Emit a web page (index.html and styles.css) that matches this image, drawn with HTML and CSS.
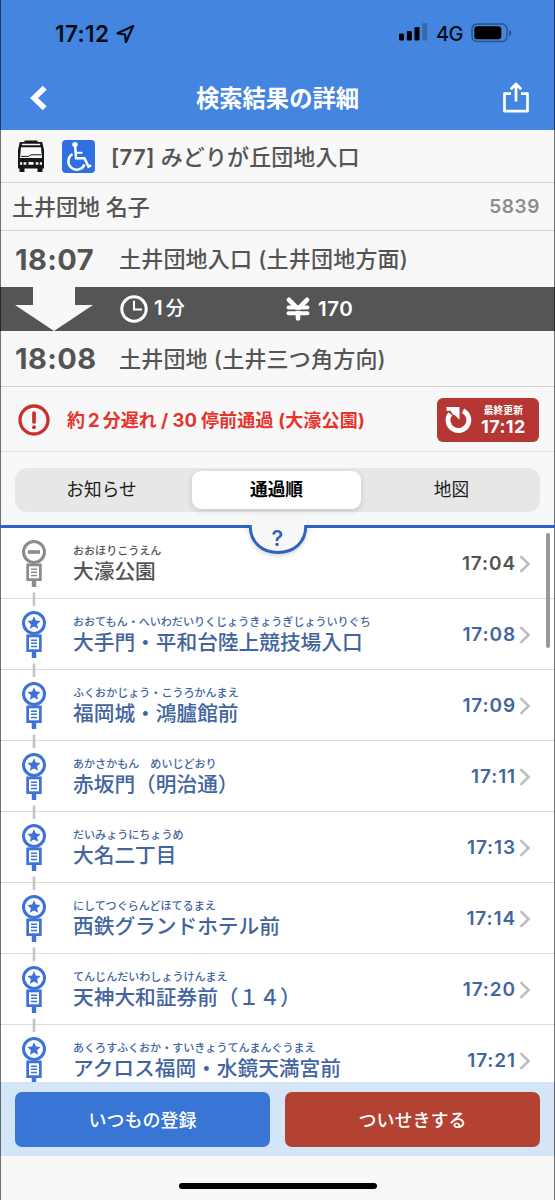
FILE: index.html
```html
<!DOCTYPE html>
<html lang="ja">
<head>
<meta charset="utf-8">
<title>検索結果の詳細</title>
<link rel="stylesheet" href="styles.css">
</head>
<body>
<svg class="defs" width="0" height="0">
  <symbol id="pole" viewBox="0 0 24 66">
    <circle cx="12" cy="12" r="10.500" fill="none" stroke="currentColor" stroke-width="3"/>
    <path d="M4.300 23.500h15.400v17.500h-5.500v6h-4.400v-6h-5.500z" fill="currentColor"/>
    <path d="M7 26.300h10v12H7z" fill="#fff"/>
    <path d="M9 29.200h6M9 32.300h6M9 35.400h6" stroke="currentColor" stroke-width="1.500"/>
    <path d="M12 52.500v13.500" stroke="#c4c4c4" stroke-width="2.600"/>
  </symbol>
  <symbol id="star" viewBox="0 0 24 66">
    <path d="M12 5.300l1.900 4.300 4.700.5-3.500 3.100 1 4.600-4.100-2.400-4.100 2.400 1-4.600-3.500-3.100 4.700-.5z" fill="currentColor"/>
  </symbol>
  <symbol id="chev" viewBox="0 0 12 18">
    <path d="M1.500 1.200L9.600 9l-8.100 7.800" fill="none" stroke="#bdbdbf" stroke-width="2.500"/>
  </symbol>
</svg>
<div class="screen">
  <header class="header">
    <div class="status">
      <span class="status-time">17:12</span>
      <svg class="location" width="19" height="20" viewBox="0 0 19 20"><path d="M17.200 2L1.500 9.300l7.500 1.200.9 7.500z" fill="none" stroke="#050c16" stroke-width="2.200" stroke-linejoin="round"/></svg>
      <svg class="signal" width="29" height="18" viewBox="0 0 29 18"><rect x="0" y="10.500" width="5" height="7" rx="1.300"/><rect x="7.800" y="8" width="5" height="9.500" rx="1.300"/><rect x="15.500" y="4" width="5" height="13.500" rx="1.300"/><rect x="23.200" y="0" width="5" height="17.500" rx="1.300" fill="#3569b0"/></svg>
      <span class="network">4G</span>
      <svg class="battery" width="42" height="20" viewBox="0 0 42 20"><rect x="1" y="1" width="35" height="17.500" rx="5" fill="none" stroke="#2a528c" stroke-width="1.400"/><rect x="3.300" y="3.300" width="27" height="13" rx="3"/><path d="M38 7c3 1 3 5 0 6z" fill="#2a528c"/></svg>
    </div>
    <div class="nav">
      <svg width="18" height="28" viewBox="0 0 18 28"><path d="M14.700 3.800L4 14l10.700 10.200" fill="none" stroke="#fff" stroke-width="5.600"/></svg>
      <h1 class="title">検索結果の詳細</h1>
      <svg width="26" height="31" viewBox="0 0 26 31"><path d="M8 11.700H1.500v17.500h23V11.700H18M13 19.500V2.500M7.800 7.200L13 2l5.200 5.200" fill="none" stroke="#fff" stroke-width="2.700" stroke-linejoin="round"/></svg>
    </div>
  </header>

  <section class="line-row">
    <svg class="bus" width="28" height="32" viewBox="0 0 28 32">
      <path d="M7.500.5h13v2.200h-13zM2.800 2h22.400l1.800 8v18.500H1V10z" fill="#161616"/>
      <path d="M4.800 3.800h18.400v1.400H4.800zM4 7.200h20l1 10.800H3z" fill="#f8f8f8"/>
      <path d="M4 16.400h7.500l2.500-1.600h10" fill="none" stroke="#161616" stroke-width="1"/>
      <path d="M3 22.200h2.200v2.500H3zM6.600 22.200h2.700v2.500H6.600zM11.500 22h5v2.700h-5zM18.700 22.200h2.700v2.500h-2.700zM22.800 22.200H25v2.500h-2.200z" fill="#f8f8f8"/>
      <path d="M2.500 28h5v4h-5zM20.500 28h5v4h-5z" fill="#161616"/>
    </svg>
    <svg class="wheelchair" width="33" height="33" viewBox="0 0 33 33">
      <rect width="33" height="33" rx="4" fill="#2f6fe0"/>
      <circle cx="13" cy="4.600" r="2.700" fill="#fff"/>
      <path d="M13.200 6.500l.8 11.800h8.500l4 8.200 2.700-1.200" fill="none" stroke="#fff" stroke-width="2.500"/>
      <path d="M14 12.800h6.500" stroke="#fff" stroke-width="2"/>
      <path d="M10.500 14a8.400 8.400 0 1 0 12 10.500" fill="none" stroke="#fff" stroke-width="2.400"/>
    </svg>
    <span class="route"><b class="route-no">[77]</b> みどりが丘団地入口</span>
  </section>
  <section class="vehicle-row">
    <span>土井団地 名子</span><span class="vehicle-no">5839</span>
  </section>

  <section class="trip">
    <div class="trip-stop dep"><span class="trip-time">18:07</span><span>土井団地入口 (土井団地方面)</span></div>
    <div class="trip-info">
      <svg class="arrow" width="78" height="44" viewBox="0 0 78 44"><path d="M18 0h42v18h18L39 44 0 18h18z" fill="#f8f8f8"/></svg>
      <svg class="clock" width="28" height="28" viewBox="0 0 28 28"><circle cx="14" cy="14" r="12.200" fill="none" stroke="#fff" stroke-width="3"/><path d="M14 5.800v8.800h8" fill="none" stroke="#fff" stroke-width="2"/></svg>
      <span class="duration">1<i>分</i></span>
      <svg class="yen" width="24" height="24" viewBox="0 0 24 24"><path d="M3 2.800L12 12l9-9.200M12 12v9.500" fill="none" stroke="#fff" stroke-width="4.600" stroke-linecap="round" stroke-linejoin="round"/><path d="M2.500 10.600h19M2.500 16.300h19" stroke="#fff" stroke-width="4" stroke-linecap="round"/><path d="M1 13.400h22" stroke="#555" stroke-width="1"/></svg>
      <span class="fare">170</span>
    </div>
    <div class="trip-stop arr"><span class="trip-time">18:08</span><span>土井団地 (土井三つ角方向)</span></div>
  </section>

  <section class="alert">
    <svg width="32" height="32" viewBox="0 0 32 32"><circle cx="16" cy="16" r="14" fill="none" stroke="#cb302c" stroke-width="3.300"/><path d="M16 9v9" stroke="#cb302c" stroke-width="3.700" stroke-linecap="round"/><circle cx="16" cy="23.200" r="2" fill="#cb302c"/></svg>
    <span class="alert-text">約<b class="two">2</b>分遅れ <b>/ 30</b><span class="alert-tail">停前通過 (大濠公園)</span></span>
    <button class="refresh">
      <svg width="27" height="28" viewBox="0 0 27 28"><path d="M18 4.800A10.400 10.400 0 1 1 5.200 7.800" fill="none" stroke="#fff" stroke-width="4.900"/><path d="M1.500 1h13v12.800L10.300 9.500 8 8.500 5.500 4.700H1.500z" fill="#fff"/></svg>
      <span class="refresh-label"><small>最終更新</small><b>17:12</b></span>
    </button>
  </section>

  <section class="tabs-area">
    <div class="tabs"><span>お知らせ</span><span class="active">通過順</span><span>地図</span></div>
    <div class="help">
      <svg width="64" height="40" viewBox="0 0 64 40"><path d="M3 0h58v7c-2.600 0-1.800 24-29 24S5.600 7 3 7z" fill="#f8f8f8"/><path d="M0 6.500h4.300C4.300 22 16 32.500 32 32.500S59.700 22 59.700 6.500H64" fill="none" stroke="#3062c2" stroke-width="3"/></svg>
      <span>?</span>
    </div>
  </section>

  <main class="stops">
    <div class="stop passed">
      <svg class="pole" viewBox="0 0 24 66"><use href="#pole"/><path d="M6 12h12" stroke="currentColor" stroke-width="3.600"/></svg>
      <div class="name"><small>おおほりこうえん</small><span>大濠公園</span></div><time>17:04</time><svg class="chev"><use href="#chev"/></svg>
    </div>
    <div class="stop">
      <svg class="pole" viewBox="0 0 24 66"><use href="#pole"/><use href="#star"/></svg>
      <div class="name"><small>おおてもん・へいわだいりくじょうきょうぎじょういりぐち</small><span>大手門・平和台陸上競技場入口</span></div><time>17:08</time><svg class="chev"><use href="#chev"/></svg>
    </div>
    <div class="stop">
      <svg class="pole" viewBox="0 0 24 66"><use href="#pole"/><use href="#star"/></svg>
      <div class="name"><small>ふくおかじょう・こうろかんまえ</small><span>福岡城・鴻臚館前</span></div><time>17:09</time><svg class="chev"><use href="#chev"/></svg>
    </div>
    <div class="stop">
      <svg class="pole" viewBox="0 0 24 66"><use href="#pole"/><use href="#star"/></svg>
      <div class="name"><small>あかさかもん　めいじどおり</small><span>赤坂門（明治通）</span></div><time>17:11</time><svg class="chev"><use href="#chev"/></svg>
    </div>
    <div class="stop">
      <svg class="pole" viewBox="0 0 24 66"><use href="#pole"/><use href="#star"/></svg>
      <div class="name"><small>だいみょうにちょうめ</small><span>大名二丁目</span></div><time>17:13</time><svg class="chev"><use href="#chev"/></svg>
    </div>
    <div class="stop">
      <svg class="pole" viewBox="0 0 24 66"><use href="#pole"/><use href="#star"/></svg>
      <div class="name"><small>にしてつぐらんどほてるまえ</small><span>西鉄グランドホテル前</span></div><time>17:14</time><svg class="chev"><use href="#chev"/></svg>
    </div>
    <div class="stop">
      <svg class="pole" viewBox="0 0 24 66"><use href="#pole"/><use href="#star"/></svg>
      <div class="name"><small>てんじんだいわしょうけんまえ</small><span>天神大和証券前（１４）</span></div><time>17:20</time><svg class="chev"><use href="#chev"/></svg>
    </div>
    <div class="stop">
      <svg class="pole" viewBox="0 0 24 66"><use href="#pole"/><use href="#star"/></svg>
      <div class="name"><small>あくろすふくおか・すいきょうてんまんぐうまえ</small><span>アクロス福岡・水鏡天満宮前</span></div><time>17:21</time><svg class="chev"><use href="#chev"/></svg>
    </div>
    <div class="scrollbar"></div>
  </main>

  <div class="actions"><button class="register">いつもの登録</button><button class="track">ついせきする</button></div>
  <footer class="home"><div class="indicator"></div></footer>
</div>
</body>
</html>
```
FILE: styles.css
```css
* { box-sizing: border-box; }
body { margin: 0; font-family: Inter, "Noto Sans CJK JP", sans-serif; font-weight: 500; color: #545454; }
svg { display: block; flex: none; }
.defs { position: absolute; }
button { border: 0; padding: 0; font: inherit; color: #fff; }
i { font-style: normal; }
.screen { position: relative; width: 555px; height: 1200px; display: flex; flex-direction: column; background: #f8f8f8; overflow: hidden; white-space: nowrap; }
.screen::after { content: ""; position: absolute; inset: 0; border: solid rgba(0, 0, 0, .55); border-width: 0 1px; pointer-events: none; }
.screen > * { flex: none; }

.header { height: 130px; background: #4385df; color: #050c16; }
.status { height: 65px; display: flex; align-items: center; padding: 3px 42px 0 55px; }
.status-time { font-size: 22.500px; font-weight: 600; letter-spacing: .4px; width: 57px; margin-top: -2px; }
.location { margin-left: 4px; }
.signal { margin-left: auto; margin-top: -5px; }
.network { font-size: 20px; letter-spacing: -.7px; margin-left: 8px; width: 25px; }
.battery { margin-left: 10px; margin-top: -2px; }
.nav { height: 65px; display: flex; align-items: center; justify-content: space-between; padding: 0 26px 0 30px; }
.title { margin: 2px 0 0; padding-left: 4px; font-size: 23.300px; font-weight: 700; color: #fff; line-height: 30px; }

.line-row { height: 53px; display: flex; align-items: center; padding-left: 17px; border-bottom: 1px solid #d2d2d2; font-size: 22px; }
.wheelchair { margin-left: 17px; }
.route { margin: 1px 0 0 16px; line-height: 30px; letter-spacing: .1px; }
.route-no { font-weight: 600; font-size: 22px; letter-spacing: .4px; }
.vehicle-row { height: 48px; display: flex; align-items: center; justify-content: space-between; padding: 0 15px 3px 12px; border-bottom: 1px solid #d2d2d2; font-size: 22px; }
.vehicle-no { margin-top: 3px; font-size: 19px; font-weight: 600; color: #8c8c90; letter-spacing: .6px; }

.trip-stop { height: 56px; display: flex; align-items: center; padding-left: 15px; font-size: 22px; line-height: 30px; letter-spacing: .2px; }
.trip-time { width: 104px; font-size: 29px; font-weight: 700; letter-spacing: .4px; }
.arr { border-bottom: 1px solid #d2d2d2; }
.arr .trip-time, .dep .trip-time { padding-top: 1px; }
.trip-info { height: 44px; display: flex; align-items: center; padding-left: 15px; background: #555; color: #fff; font-size: 20.500px; font-weight: 600; }
.clock { margin-left: 27px; }
.duration { margin: -2px 0 0 6px; width: 132px; line-height: 28px; }
.duration i { font-size: 19px; font-weight: 500; margin-left: 3px; }
.yen { margin-top: -1px; }
.fare { margin: -2px 0 0 8px; letter-spacing: .6px; }

.alert { height: 65px; display: flex; align-items: center; padding: 0 16px 0 18px; border-bottom: 1px solid #dedede; color: #e5342c; }
.alert > svg { margin-top: 2px; }
.alert-text { margin: 3px 0 0 17px; font-size: 18px; line-height: 28px; font-weight: 700; }
.alert-text b { font-weight: 700; font-size: 18.500px; }
.alert-text .two { margin: 0 3px; }
.alert-tail { margin-left: 4px; font-size: 18px; letter-spacing: .2px; }
.refresh { width: 102px; height: 44px; margin-left: auto; margin-top: 2px; padding-left: 8px; display: flex; align-items: center; border-radius: 6px; background: #b53632; }
.refresh-label { margin-left: 9px; display: flex; flex-direction: column; align-items: center; }
.refresh-label small { font-size: 9.800px; line-height: 14px; font-weight: 700; }
.refresh-label b { font-size: 18px; line-height: 18px; font-weight: 700; letter-spacing: .4px; }

.tabs-area { position: relative; z-index: 1; height: 76px; padding: 16px 15px 0; border-bottom: 3px solid #3062c2; }
.tabs { height: 44px; display: grid; grid-template-columns: 173px 173px 1fr; padding: 2px; border-radius: 12px; background: #e7e7e7; color: #1c1c1c; font-size: 17.700px; font-weight: 400; line-height: 38px; text-align: center; }
.tabs span { margin: 1px 2px; }
.tabs span:first-child { margin-right: 6px; }
.tabs span:last-child { margin-right: 0; }
.tabs .active { border-radius: 9px; background: #fff; color: #000; font-weight: 700; box-shadow: 0 2px 6px rgba(0, 0, 0, .14); }
.help { position: absolute; left: 245.500px; top: 68px; width: 64px; height: 40px; filter: drop-shadow(0 2px 2px rgba(0, 0, 0, .16)); }
.help span { position: absolute; left: 0; top: 6px; width: 64px; text-align: center; color: #3062c2; font-size: 22px; line-height: 24px; font-weight: 600; }

.stops { position: relative; height: 554px; background: #fff; overflow: hidden; }
.stop { height: 71px; display: flex; align-items: flex-start; padding-left: 21.500px; padding-right: 24px; border-bottom: 1px solid #dcdcdc; color: #42649f; }
.pole { width: 24px; height: 66px; margin-top: 12px; color: #3d72d8; }
.passed { color: #535353; }
.passed .pole { color: #8b8b8b; }
.name { margin-left: 27.500px; padding-top: 15px; }
.name small { display: block; font-size: 11.050px; line-height: 17px; }
.name span { display: block; font-size: 20.700px; line-height: 26px; margin-top: -1px; }
.stop time { margin-left: auto; margin-top: 24px; font-size: 19px; line-height: 24px; font-weight: 600; letter-spacing: .9px; }
.chev { width: 12px; height: 18px; margin: 27px 0 0 3px; }
.scrollbar { position: absolute; right: 5px; top: 5px; width: 4px; height: 115px; border-radius: 2px; background: #989898; }

.actions { height: 74px; display: grid; grid-template-columns: 1fr 1fr; gap: 15px; padding: 10px 15px 9px; background: #d4e5f8; }
.actions button { border-radius: 7px; font-size: 18px; font-weight: 500; line-height: 30px; padding-top: 2px; }
.register { background: #3875d5; }
.track { background: #b44232; }
.home { flex: 1; display: flex; justify-content: center; padding-top: 27px; }
.indicator { width: 198px; height: 6px; border-radius: 3px; background: #000; }
```
